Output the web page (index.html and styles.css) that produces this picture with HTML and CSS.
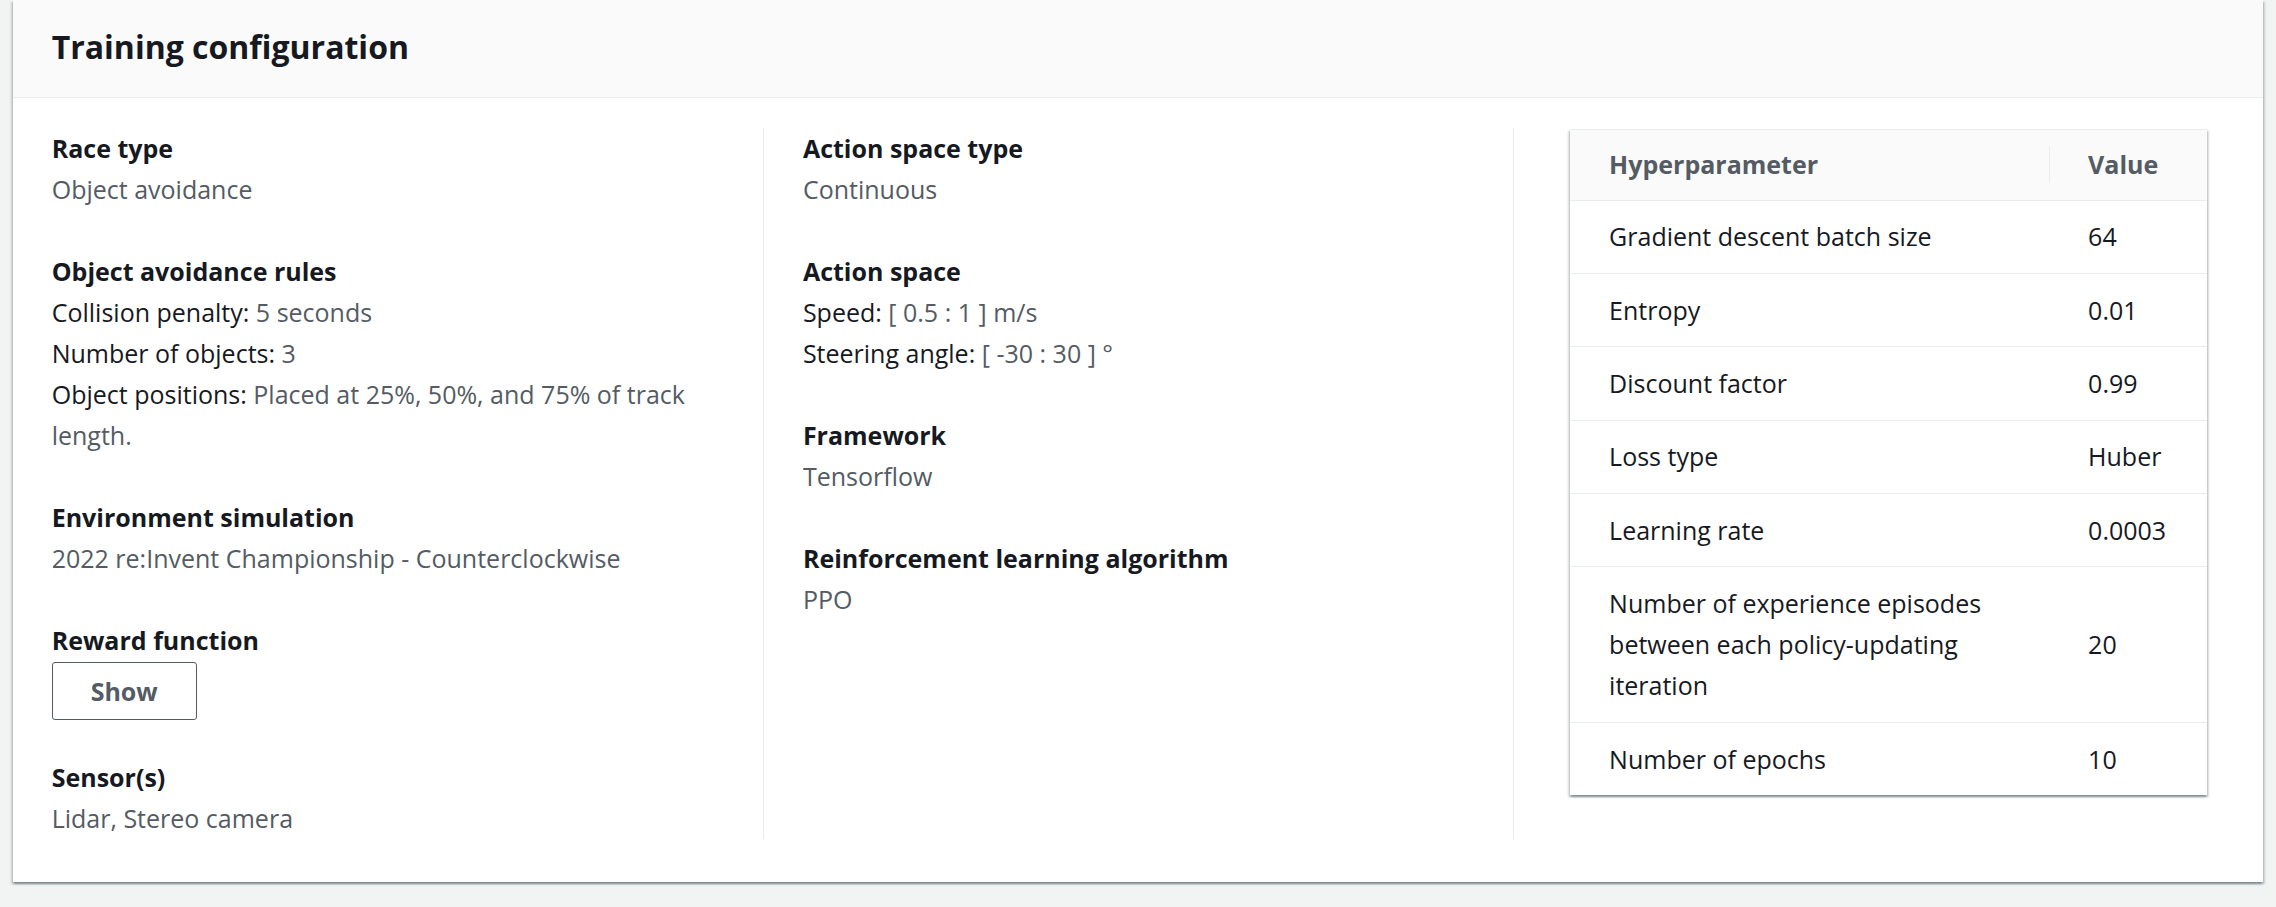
FILE: index.html
```html
<!DOCTYPE html>
<html lang="en">
<head>
<meta charset="utf-8">
<title>Training configuration</title>
<link rel="stylesheet" href="styles.css">
</head>
<body>
<section class="panel">
  <header class="panel-header">
    <h2 class="panel-title">Training configuration</h2>
  </header>
  <div class="panel-body">
    <div class="columns">
      <div class="col">
        <div class="kv">
          <div class="kv-label">Race type</div>
          <div class="kv-value">Object avoidance</div>
        </div>
        <div class="kv">
          <div class="kv-label">Object avoidance rules</div>
          <div class="kv-value"><span class="key">Collision penalty:</span> 5 seconds</div>
          <div class="kv-value"><span class="key">Number of objects:</span> 3</div>
          <div class="kv-value"><span class="key">Object positions:</span> Placed at 25%, 50%, and 75% of track length.</div>
        </div>
        <div class="kv">
          <div class="kv-label">Environment simulation</div>
          <div class="kv-value">2022 re:Invent Championship - Counterclockwise</div>
        </div>
        <div class="kv kv-reward">
          <div class="kv-label">Reward function</div>
          <button class="btn" type="button">Show</button>
        </div>
        <div class="kv">
          <div class="kv-label">Sensor(s)</div>
          <div class="kv-value">Lidar, Stereo camera</div>
        </div>
      </div>
      <div class="col">
        <div class="kv">
          <div class="kv-label">Action space type</div>
          <div class="kv-value">Continuous</div>
        </div>
        <div class="kv">
          <div class="kv-label">Action space</div>
          <div class="kv-value"><span class="key">Speed:</span> [ 0.5 : 1 ] m/s</div>
          <div class="kv-value"><span class="key">Steering angle:</span> [ -30 : 30 ] °</div>
        </div>
        <div class="kv">
          <div class="kv-label">Framework</div>
          <div class="kv-value">Tensorflow</div>
        </div>
        <div class="kv">
          <div class="kv-label">Reinforcement learning algorithm</div>
          <div class="kv-value">PPO</div>
        </div>
      </div>
      <div class="col">
        <div class="table-wrap">
          <table class="hp-table">
            <colgroup>
              <col class="c-name">
              <col class="c-value">
            </colgroup>
            <thead>
              <tr><th>Hyperparameter</th><th class="th-sep">Value</th></tr>
            </thead>
            <tbody>
              <tr><td>Gradient descent batch size</td><td>64</td></tr>
              <tr><td>Entropy</td><td>0.01</td></tr>
              <tr><td>Discount factor</td><td>0.99</td></tr>
              <tr><td>Loss type</td><td>Huber</td></tr>
              <tr><td>Learning rate</td><td>0.0003</td></tr>
              <tr><td>Number of experience episodes between each policy-updating iteration</td><td>20</td></tr>
              <tr><td>Number of epochs</td><td>10</td></tr>
            </tbody>
          </table>
        </div>
      </div>
    </div>
  </div>
</section>
</body>
</html>
```
FILE: styles.css
```css
* {
  box-sizing: border-box;
}

html,
body {
  margin: 0;
}

body {
  background: #f2f3f3;
  padding: 0 12.7px;
  height: 907px;
  overflow: hidden;
  font-family: "Open Sans", "Noto Sans", "Liberation Sans", sans-serif;
  font-size: 25px;
  line-height: 41px;
  color: #16191f;
}

.panel {
  background: #ffffff;
  box-shadow: 0 2px 2px 0 rgba(0, 28, 36, 0.3),
    2px 2px 2px 0 rgba(0, 28, 36, 0.15),
    -2px 2px 2px 0 rgba(0, 28, 36, 0.15);
}

.panel-header {
  background: #fafafa;
  border-bottom: 1px solid #eaeded;
  height: 98px;
  padding: 24px 39px 0;
}

.panel-title {
  margin: 0;
  font-size: 32px;
  line-height: 46px;
  font-weight: 700;
  color: #16191f;
}

.panel-body {
  padding: 30px 0 43px;
}

.columns {
  display: grid;
  grid-template-columns: repeat(3, 1fr);
}

.col {
  padding: 0 39px;
  min-width: 0;
}

.col + .col {
  border-left: 1px solid #eaeded;
}

.kv + .kv {
  margin-top: 41px;
}

.kv-reward + .kv {
  margin-top: 37px;
}

.kv-label {
  font-weight: 700;
  color: #16191f;
}

.kv-value {
  color: #545b64;
}

.key {
  color: #16191f;
}

.btn {
  display: flex;
  align-items: center;
  justify-content: center;
  width: 145px;
  height: 58px;
  margin: 1px 0 0;
  padding: 0;
  background: #ffffff;
  border: 1px solid #545b64;
  border-radius: 3px;
  color: #545b64;
  font-family: inherit;
  font-size: 25px;
  font-weight: 700;
  line-height: 41px;
}

.table-wrap {
  margin: 1px 17px 0;
  border-top: 1px solid #eaeded;
  background: #ffffff;
  box-shadow: 0 2px 2px 0 rgba(0, 28, 36, 0.3),
    2px 2px 2px 0 rgba(0, 28, 36, 0.15),
    -2px 2px 2px 0 rgba(0, 28, 36, 0.15);
}

.hp-table {
  width: 100%;
  border-collapse: collapse;
  table-layout: fixed;
}

.c-name {
  width: 479px;
}

.hp-table th {
  position: relative;
  background: #fafafa;
  color: #545b64;
  font-weight: 700;
  text-align: left;
  padding: 14.3px 39px;
  border-bottom: 1px solid #eaeded;
}

.hp-table .th-sep::before {
  content: "";
  position: absolute;
  left: 0;
  top: 16px;
  bottom: 17px;
  width: 1px;
  background: #eaeded;
}

.hp-table td {
  padding: 15.7px 39px;
  border-bottom: 1px solid #eaeded;
  vertical-align: middle;
  color: #16191f;
}

.hp-table tbody tr:last-child td {
  border-bottom: none;
}
```
